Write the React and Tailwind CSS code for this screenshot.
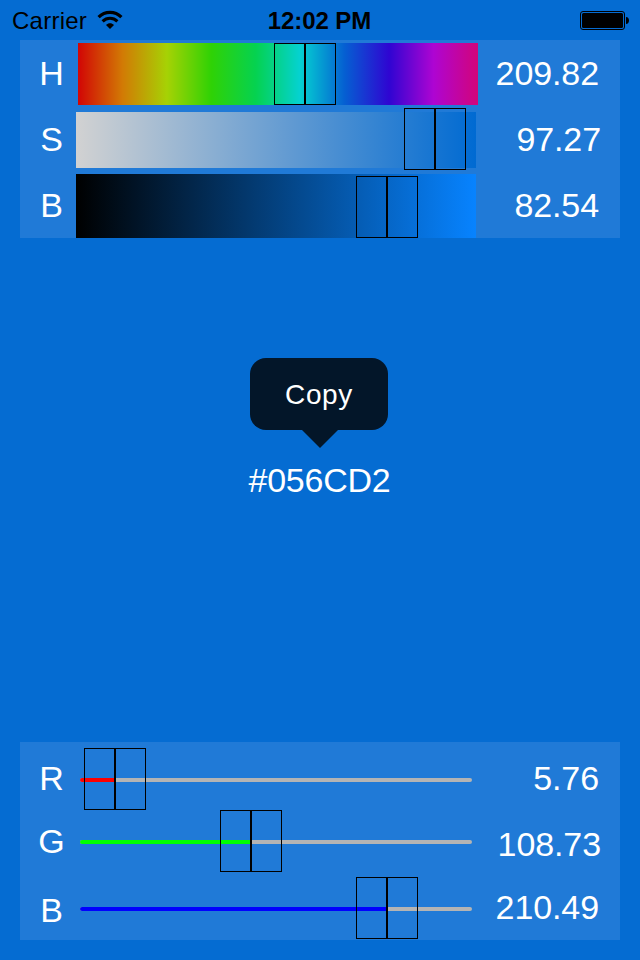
const gradients = {
  hue: "bg-[linear-gradient(to_right,#d20505_0%,#d27a05_11.11%,#a6d205_22.22%,#2fd205_33.33%,#05d250_44.44%,#05d2d2_55.56%,#055fd2_66.67%,#2f05d2_77.78%,#ae05d2_88.89%,#d2057a_100%)]",
  saturation: "bg-[linear-gradient(to_right,#d2d2d2,#006ad2)]",
  brightness: "bg-[linear-gradient(to_right,#000000,#0783ff)]",
};

function Thumb({ place }) {
  return (
    <div className={`absolute h-[62px] w-[62px] border border-black ${place}`}>
      <div className="mx-auto h-full w-[2px] bg-black" />
    </div>
  );
}

function HsbRow({ label, value, track, thumb, right = "pr-[21px]" }) {
  return (
    <div className="flex h-[66px] items-start">
      <span className="w-9 pt-[13px] pl-px text-center">{label}</span>
      <div className={`relative shrink-0 w-[400px] ${track}`}>
        <Thumb place={thumb} />
      </div>
      <span className={`ml-auto pt-[13px] tracking-[-0.1px] ${right}`}>{value}</span>
    </div>
  );
}

function RgbRow({ label, value, row = "", labelPad, valuePad, track, fill, thumb, right = "pr-[21px]" }) {
  return (
    <div className={`flex h-[62px] items-start ${row}`}>
      <span className={`w-9 pl-px text-center ${labelPad}`}>{label}</span>
      <div className={`relative ml-[11px] h-1 w-[392px] shrink-0 rounded-full bg-[#b4b4b4] ${track}`}>
        <div className={`h-1 rounded-l-full ${fill}`} />
        <Thumb place={thumb} />
      </div>
      <span className={`ml-auto tracking-[-0.1px] ${valuePad} ${right}`}>{value}</span>
    </div>
  );
}

function StatusBar() {
  return (
    <header className="grid h-10 grid-cols-3 items-center pl-3 pr-[11px] text-[24px] leading-[40px] text-black">
      <div className="flex items-center">
        <span className="pt-px tracking-[0.25px]">Carrier</span>
        <svg className="ml-[10px] mt-[-1px]" width="26" height="20" viewBox="0 0 26 20" fill="none">
          <path d="M1.6 7.2C8 .8 18 .8 24.4 7.2" stroke="#000" strokeWidth="3.2" />
          <path d="M5.6 11.3c4.3-4 10.5-4 14.8 0" stroke="#000" strokeWidth="3.1" />
          <path d="M9 14.9c2.4-2.2 5.6-2.2 8 0l-4 4z" fill="#000" />
        </svg>
      </div>
      <span className="mr-[2px] pt-px text-center font-bold whitespace-nowrap tracking-[-0.1px]">12:02 PM</span>
      <svg className="ml-auto" width="49" height="20" viewBox="0 0 49 20">
        <rect x=".5" y=".5" width="44" height="18" rx="2.5" fill="none" stroke="#000" />
        <rect x="2" y="2" width="41" height="15" rx="1.5" />
        <path d="M46 6c4 0 4 7 0 7z" />
      </svg>
    </header>
  );
}

export default function App() {
  return (
    <div className="flex h-[960px] w-[640px] flex-col overflow-hidden bg-[#056cd2] font-['Liberation_Sans',Arial,sans-serif] text-[34px] leading-[40px] text-white">
      <StatusBar />
      <section className="mx-5 h-[198px] bg-[#207ad7] pl-[13px]">
        <HsbRow label="H" value="209.82" track={`ml-[9px] mt-[3px] h-[62px] ${gradients.hue}`} thumb="left-[196px] top-0" />
        <HsbRow label="S" value="97.27" right="pr-[19px]" track={`ml-[7px] mt-[6px] h-[56px] ${gradients.saturation}`} thumb="left-[328px] top-[-4px]" />
        <HsbRow label="B" value="82.54" track={`ml-[7px] mt-[2px] h-[64px] ${gradients.brightness}`} thumb="left-[280px] top-[2px]" />
      </section>

      <main className="flex flex-1 flex-col items-center pt-[120px]">
        <div className="mr-[2px] flex h-[72px] w-[138px] items-center justify-center rounded-2xl bg-[#031629] pt-[2px] text-[28px] tracking-[0.6px]">
          Copy
        </div>
        <svg className="mr-px" width="36" height="18" viewBox="0 0 36 18" fill="#031629">
          <path d="M0 0H36L18 18Z" />
        </svg>
        <div className="mt-[12px] mr-px tracking-[-0.25px]">#056CD2</div>
      </main>

      <section className="mx-5 mb-5 h-[198px] bg-[#207ad7] pt-[6px] pl-[13px]">
        <RgbRow label="R" value="5.76" labelPad="pt-[10px]" valuePad="pt-[10px]" track="mt-[30px]" fill="w-[35px] bg-[#ff0000]" thumb="left-[4px] top-[-30px]" />
        <RgbRow label="G" value="108.73" labelPad="pt-[11px]" valuePad="pt-[14px]" right="pr-[19px]" track="mt-[30px]" fill="w-[171px] bg-[#00ff00]" thumb="left-[140px] top-[-30px]" />
        <RgbRow label="B" value="210.49" row="mt-[5px]" labelPad="pt-[13px]" valuePad="pt-[10px]" track="mt-[30px]" fill="w-[307px] bg-[#0000ff]" thumb="left-[276px] top-[-30px]" />
      </section>
    </div>
  );
}
